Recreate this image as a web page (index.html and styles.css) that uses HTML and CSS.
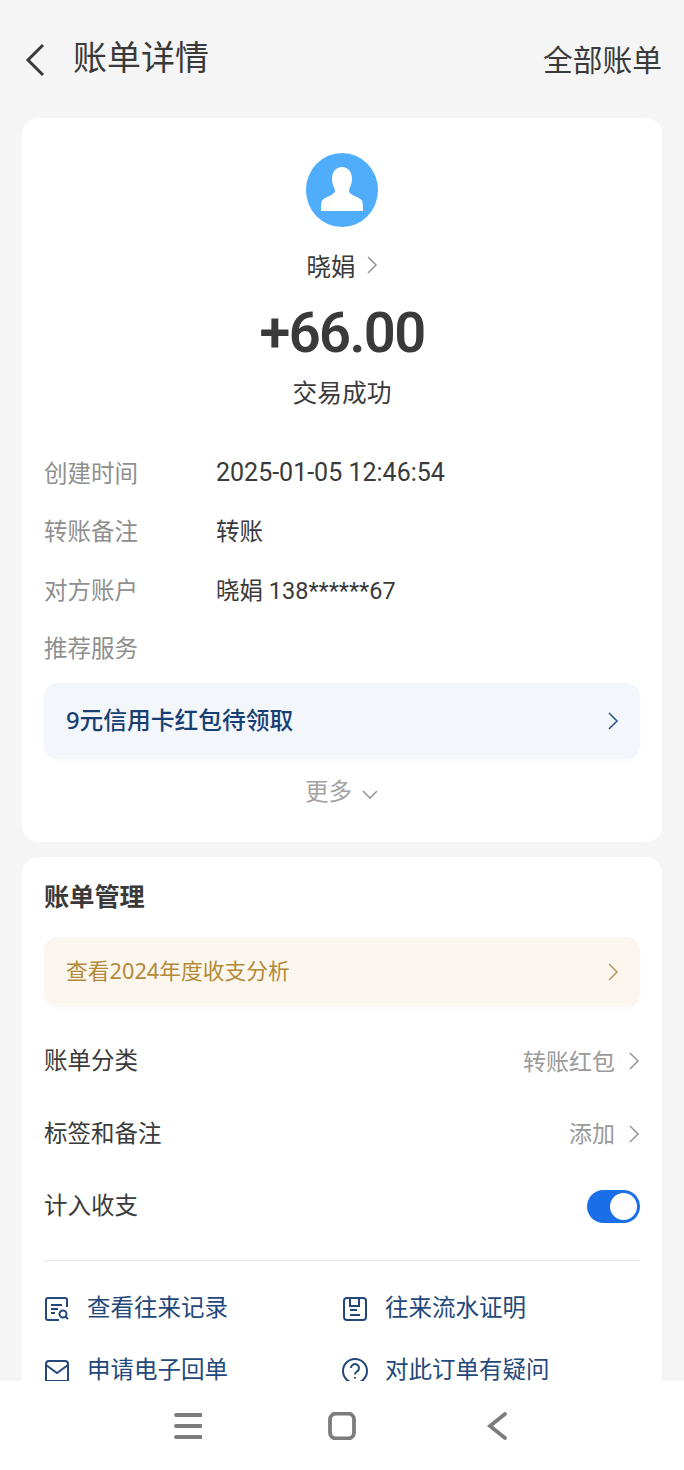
FILE: index.html
```html
<!DOCTYPE html>
<html lang="zh-CN">

<head>
  <meta charset="UTF-8" />
  <meta name="viewport" content="width=device-width, initial-scale=1.0" />
  <title>账单详情</title>
  <link rel="stylesheet" href="styles.css">
</head>

<body>
  <div class="page">
    <header class="top-bar">
      <div class="top-left">
        <svg class="back-icon" width="22" height="36" viewBox="0 0 22 36">
          <path d="M19 3 L4 18 L19 33" />
        </svg>
        <h1>账单详情</h1>
      </div>
      <span class="all-bills">全部账单</span>
    </header>

    <main class="content">
      <section class="card card-detail">
        <svg class="avatar" width="72" height="74" viewBox="0 0 72 74">
          <ellipse cx="36" cy="37" rx="36" ry="37" fill="#4fadfb" />
          <path fill="#fff" d="M36 14c-6 0-10 5-10 11.500 0 4.500 1.500 8 2.500 10 1 2 .5 4-1.500 5.500-3 2-8 3.500-10.500 6-1.300 1.500-1.500 5-1.500 11h42c0-6-.2-9.500-1.500-11-2.500-2.500-7.500-4-10.500-6-2-1.500-2.500-3.500-1.500-5.500 1-2 2.500-5.500 2.500-10C46 19 42 14 36 14z" />
        </svg>
        <div class="payee">
          <span>晓娟</span>
          <svg class="chevron" width="12" height="20" viewBox="0 0 12 20">
            <path d="M2 2 L10 10 L2 18" />
          </svg>
        </div>
        <div class="amount">+66.00</div>
        <div class="status">交易成功</div>

        <dl class="info-list">
          <div class="info-row">
            <dt>创建时间</dt>
            <dd class="info-time">2025-01-05 12:46:54</dd>
          </div>
          <div class="info-row">
            <dt>转账备注</dt>
            <dd>转账</dd>
          </div>
          <div class="info-row">
            <dt>对方账户</dt>
            <dd>晓娟 138******67</dd>
          </div>
          <div class="info-row">
            <dt>推荐服务</dt>
          </div>
        </dl>

        <div class="promo promo-blue">
          <span>9元信用卡红包待领取</span>
          <svg class="chevron" width="12" height="20" viewBox="0 0 12 20">
            <path d="M2 2 L10 10 L2 18" />
          </svg>
        </div>

        <div class="more">
          <span>更多</span>
          <svg class="chevron" width="18" height="11" viewBox="0 0 18 11">
            <path d="M2 2 L9 9 L16 2" />
          </svg>
        </div>
      </section>

      <section class="card card-manage">
        <h2>账单管理</h2>

        <div class="promo promo-gold">
          <span>查看2024年度收支分析</span>
          <svg class="chevron" width="12" height="20" viewBox="0 0 12 20">
            <path d="M2 2 L10 10 L2 18" />
          </svg>
        </div>

        <div class="manage-row">
          <span>账单分类</span>
          <div class="manage-value">
            <span>转账红包</span>
            <svg class="chevron" width="12" height="20" viewBox="0 0 12 20">
              <path d="M2 2 L10 10 L2 18" />
            </svg>
          </div>
        </div>
        <div class="manage-row">
          <span>标签和备注</span>
          <div class="manage-value">
            <span>添加</span>
            <svg class="chevron" width="12" height="20" viewBox="0 0 12 20">
              <path d="M2 2 L10 10 L2 18" />
            </svg>
          </div>
        </div>
        <div class="manage-row">
          <span>计入收支</span>
          <div class="toggle"><div class="toggle-knob"></div></div>
        </div>

        <hr />

        <div class="link-grid">
          <div class="link-item">
            <svg class="link-icon" width="26" height="26" viewBox="0 0 26 26">
              <path d="M23 11V4a2 2 0 0 0-2-2H4a2 2 0 0 0-2 2v18a2 2 0 0 0 2 2h11" />
              <path d="M7 9h11M7 13h7M7 17h4" />
              <circle cx="19" cy="18" r="3.500" />
              <path d="M21.500 20.500L24 23" />
            </svg>
            <span>查看往来记录</span>
          </div>
          <div class="link-item">
            <svg class="link-icon" width="26" height="26" viewBox="0 0 26 26">
              <rect x="2" y="2" width="22" height="22" rx="3" />
              <path d="M8 2v8h9V2" />
              <path d="M8 14h7M8 19h10" />
            </svg>
            <span>往来流水证明</span>
          </div>
          <div class="link-item">
            <svg class="link-icon" width="26" height="26" viewBox="0 0 26 26">
              <path d="M2 6a3 3 0 0 1 3-3h16a3 3 0 0 1 3 3v17H2z" />
              <path d="M2 7l11 8 11-8" />
            </svg>
            <span>申请电子回单</span>
          </div>
          <div class="link-item">
            <svg class="link-icon" width="26" height="26" viewBox="0 0 26 26">
              <circle cx="13" cy="13" r="12" />
              <path d="M9 10a4 4 0 1 1 6 3.500c-1.300.8-2 1.500-2 3" />
              <path d="M13 19v1.500" />
            </svg>
            <span>对此订单有疑问</span>
          </div>
        </div>
      </section>
    </main>

    <nav class="nav-bar">
      <svg width="28" height="28" viewBox="0 0 28 28">
        <path d="M2 3h25M2 14h25M2 25h25" />
      </svg>
      <svg width="28" height="28" viewBox="0 0 28 28">
        <rect x="2" y="1.500" width="24" height="25" rx="6" />
      </svg>
      <svg width="28" height="28" viewBox="0 0 28 28">
        <path d="M23 2 L8 14 L23 26" />
      </svg>
    </nav>
  </div>
</body>

</html>
```

FILE: styles.css
```css
* {
  box-sizing: border-box;
}

body {
  margin: 0;
  background-color: #f5f5f5;
  color: #3a3a3a;
  font-family: 'Noto Sans', 'Noto Sans CJK SC', sans-serif;
}

.page {
  display: flex;
  flex-direction: column;
  width: 684px;
  height: 1470px;
  overflow: hidden;
}

.top-bar {
  display: flex;
  flex: none;
  align-items: center;
  justify-content: space-between;
  height: 118px;
  padding: 0 22px 0 24px;
}

.top-left {
  display: flex;
  align-items: center;
  gap: 27px;
}

.back-icon {
  margin-top: 2px;
}

.back-icon path {
  fill: none;
  stroke: #3a3a3a;
  stroke-width: 3;
}

h1 {
  margin: -4px 0 0;
  font-size: 34px;
  font-weight: 400;
  line-height: 40px;
}

.all-bills {
  font-size: 29.750px;
  line-height: 40px;
  margin-top: 2px;
}

.content {
  flex: 1;
  min-height: 0;
  overflow: hidden;
  padding: 0 22px;
}

.card {
  background: #fff;
  border-radius: 16px;
  padding: 0 22px;
}

.card-detail {
  display: flex;
  flex-direction: column;
  height: 724px;
  padding-top: 35px;
  margin-bottom: 15px;
}

.card-manage {
  padding-bottom: 40px;
}

.avatar {
  align-self: center;
  flex: none;
}

.chevron path {
  fill: none;
  stroke: #999;
  stroke-width: 1.600;
}

.payee {
  display: flex;
  align-items: center;
  justify-content: center;
  gap: 10px;
  height: 34px;
  margin-top: 21px;
  font-size: 24.500px;
}

.amount {
  margin-top: 18px;
  font-family: Roboto, 'Noto Sans', sans-serif;
  font-size: 56px;
  font-weight: 600;
  letter-spacing: -1.600px;
  line-height: 66px;
  text-align: center;
}

.status {
  margin-top: 10px;
  font-size: 24.750px;
  line-height: 34px;
  text-align: center;
}

.info-list {
  margin: 45px 0 0;
}

.info-row {
  display: flex;
  align-items: center;
  height: 34px;
  margin-bottom: 24.300px;
}

dt {
  width: 172px;
  color: #8f8f8f;
  font-size: 23.500px;
}

dd {
  margin: 0;
  font-family: Roboto, 'Noto Sans CJK SC', sans-serif;
  font-size: 23.500px;
}

.info-time {
  margin-top: 1px;
  font-size: 25px;
}

.promo {
  display: flex;
  flex: none;
  align-items: center;
  justify-content: space-between;
  padding: 0 21px 0 22px;
  border-radius: 14px;
  box-shadow: 0 2px 6px rgba(0, 0, 0, 0.02);
}

.promo span {
  margin-top: -4px;
}

.promo-blue {
  height: 76px;
  margin-top: -5px;
  background: #f3f6fb;
  color: #173f73;
  font-size: 23.750px;
  font-weight: 500;
}

.promo-blue span {
  margin-top: -5px;
}

.promo-blue .chevron path {
  stroke: #2f5688;
}

.promo-gold {
  height: 70px;
  margin-top: 23px;
  background: #fbf6ee;
  color: #b38a38;
  font-size: 21.750px;
}

.promo-gold span {
  margin-top: -6px;
}

.promo-gold .chevron path {
  stroke: #b99a5c;
}

.more {
  display: flex;
  align-items: center;
  justify-content: center;
  gap: 9px;
  margin-top: 15px;
  color: #a3a3a3;
  font-size: 23.500px;
  line-height: 34px;
}

.more .chevron {
  margin-top: 6px;
}

h2 {
  margin: 0;
  padding-top: 21px;
  font-size: 25.200px;
  font-weight: 700;
  line-height: 36px;
}

.manage-row {
  display: flex;
  align-items: center;
  justify-content: space-between;
  height: 72.500px;
  font-size: 23.500px;
}

.manage-row > span {
  margin-top: -4px;
}

.promo-gold + .manage-row {
  margin-top: 18px;
}

.manage-value {
  display: flex;
  align-items: center;
  gap: 13px;
  color: #9a9a9a;
  font-size: 23px;
}

.manage-value span {
  margin-top: -3px;
}

.toggle {
  display: flex;
  align-items: center;
  justify-content: flex-end;
  width: 53px;
  height: 33px;
  padding-right: 3px;
  border-radius: 17px;
  background: #1a6fe8;
}

.toggle-knob {
  width: 27px;
  height: 27px;
  border-radius: 50%;
  background: #fff;
}

hr {
  border: none;
  border-top: 1px solid #e6e6e6;
  margin: 17px 0 0;
}

.link-grid {
  display: grid;
  grid-template-columns: 298px 1fr;
  row-gap: 28px;
  padding-top: 31px;
}

.link-item {
  display: flex;
  align-items: center;
  gap: 17px;
  height: 34px;
  color: #24487a;
  font-size: 23.500px;
}

.link-item span {
  margin-top: -3px;
  line-height: 22px;
}

.link-icon {
  flex: none;
}

.link-icon path,
.link-icon rect,
.link-icon circle {
  fill: none;
  stroke: #24487a;
  stroke-width: 2;
}

.nav-bar {
  display: flex;
  flex: none;
  justify-content: center;
  gap: 126px;
  height: 89px;
  padding-top: 31px;
  background: #fff;
}

.nav-bar path,
.nav-bar rect {
  fill: none;
  stroke: #7c7c7c;
  stroke-width: 3.800;
  stroke-linecap: round;
}
```
